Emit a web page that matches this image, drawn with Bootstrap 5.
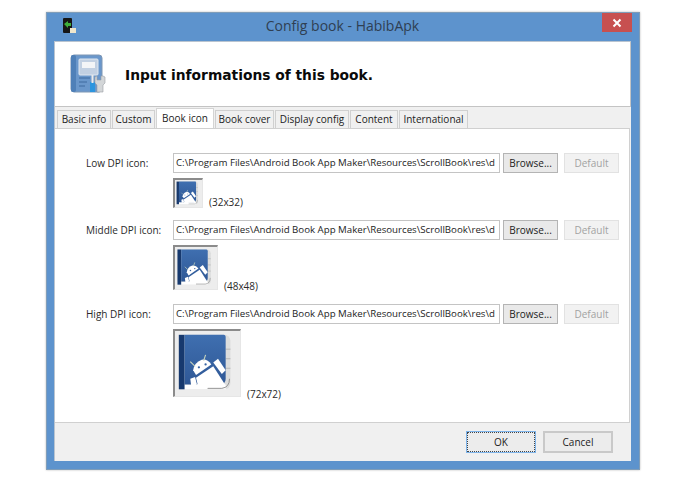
<!DOCTYPE html>
<html lang="en">
<head>
<meta charset="utf-8">
<title>Config book - HabibApk</title>
<link href="https://cdn.jsdelivr.net/npm/bootstrap@5.3.0/dist/css/bootstrap.min.css" rel="stylesheet">
<style>
html,body{background:#fff;height:487px;overflow:hidden}
body{padding:12px 60px 0 46px;font-family:"Open Sans","Liberation Sans",sans-serif;font-size:10px;color:#1c1c1c;line-height:1.2}
.win{width:594px;height:458px;background:#5d93cd;border:1px solid #7f9db9;padding:0 8px 8px 7px;box-shadow:0 0 2px #bbb}
.titlebar{height:28px;position:relative}
.wintitle{font-size:14px;color:#2f3f52;padding-bottom:1px}
.appicon{position:absolute;left:9px;top:5px}
.closebtn{position:absolute;right:-1px;top:0;width:30px;height:19px;background:#c75050;color:#fff}
.client{background:#f0f0f0;height:421px;border:1px solid #b9c4d0;border-width:1px 0 0 1px}
.headbox{height:65px;background:#fff;border:1px solid #c4c4c4;border-width:0 1px 1px 0;padding-left:15px;gap:16px}
.headtxt{font-family:"DejaVu Sans",sans-serif;font-weight:700;font-size:13.8px;color:#0a0a0a;padding-top:2px}
.tabbar{height:21px;padding:2px 0 0 2px;align-items:flex-end}
.wintab{height:18px;background:#f0f0f0;border:1px solid #d0d0d0;border-bottom:0;margin-right:1px;text-align:center;line-height:17px}
.wintab.on{background:#fff;height:20px;margin:0 1px 0 0;line-height:18px;border-color:#d4d4d4;padding-bottom:2px}
.panel{height:295px;background:#fff;border:1px solid #d0d0d0;border-width:1px 1px 1px 0;margin-right:1px;padding:24px 0 0 31px}
.flabel{width:87px;color:#2a2a2a;padding-top:1px}
.pathbox{width:327px;height:20px;border:1px solid #c4c4c4;background:#fff;padding:0 2px;line-height:18px;white-space:nowrap;overflow:hidden;font-size:9.7px}
.winbtn{width:55px;height:20px;background:#e9e9e9;border:1px solid #b4b4b4;text-align:center;line-height:18px;margin-left:3px}
.winbtn.off{margin-left:6px;background:#f2f2f2;border-color:#e2e2e2;color:#a2a2a2}
.thumbrow{margin:5px 0 12px 87px;align-items:flex-end}
.thumbrow.wide{margin-bottom:14px}
.thumbframe{display:block;background:#ededed;border:1px solid #e6e6e6;border-top:2px solid #8b8b8b;border-left:2px solid #8b8b8b}
.sz{margin-left:6px;color:#2a2a2a}
.wide .sz{margin-bottom:-2px}
.huge .sz{margin-bottom:-3px}
.foot{height:38px;padding:8px 0 0 411px;gap:7px}
.dlgbtn{width:70px;height:22px;background:#ececec;border:2px solid #c9c9c9;text-align:center;line-height:18px}
.dlgbtn.main{border:1px solid #7eb4ea;outline:1px dotted #444;outline-offset:-2px;line-height:20px}
</style>
</head>
<body>
<svg width="0" height="0" class="d-block">
<defs>
<linearGradient id="cv" x1="0" y1="0" x2="0" y2="1"><stop offset="0" stop-color="#3f6fb0"/><stop offset="1" stop-color="#2f5896"/></linearGradient>
<symbol id="bk" viewBox="0 0 68 68">
<path d="M4 4H51Q57 4 58 10V54Q58 61 51 61H4Z" fill="#dcdddd"/>
<path d="M53 19H58M53 29H58M53 39H58" stroke="#b5b5b5"/>
<path d="M4 56H53V61H4Z" fill="#fff"/>
<path d="M57 50Q57 59 49 60H34" stroke="#8e8e8e" fill="none"/>
<rect x="4" y="4" width="6" height="57" fill="#17396e"/>
<path d="M10 4H51Q53 4 53 7V50Q53 56 47 56H10Z" fill="url(#cv)"/>
<g fill="#fff">
<path d="M19 41Q20 33 28 30Q34 29 38 35L22 46Z"/>
<path d="M22 49L40 37L53 57H24Z"/>
<path d="M40 33L45 29L53 41L49 45Z"/>
<path d="M16 50L21 48L23 56L17 58Z"/>
<path d="M24 55H34V60H21Z"/>
</g>
<path d="M21 37L16 32M30 31L32 25" stroke="#c6d3bd" stroke-width="1.200"/>
<circle cx="25" cy="38" r="1.200" fill="#3a66a4"/><circle cx="32" cy="35" r="1.200" fill="#3a66a4"/>
</symbol>
</defs>
</svg>
<div class="win d-flex flex-column">
  <div class="titlebar d-flex align-items-center justify-content-center">
    <svg class="appicon" width="14" height="16" viewBox="0 0 14 16"><rect x="0" y="0" width="9" height="15" rx="1" fill="#161616"/><path d="M1 6L5 3V5H8V8H5V10Z" fill="#3fae3a"/><rect x="7" y="10" width="6" height="5" fill="#efe6cc"/></svg>
    <span class="wintitle">Config book - HabibApk</span>
    <div class="closebtn d-flex align-items-center justify-content-center"><svg width="10" height="10" viewBox="0 0 10 10"><path d="M1.500 1.500L8.500 8.500M8.500 1.500L1.500 8.500" stroke="#fff" stroke-width="2"/></svg></div>
  </div>
  <div class="client">
    <div class="headbox d-flex align-items-center">
      <svg width="39" height="39" viewBox="0 0 39 39">
        <rect x="1" y="1" width="31" height="37" rx="3" fill="#6a97cb" stroke="#7f97b4"/>
        <rect x="1" y="1" width="5" height="37" rx="2" fill="#4f80b8"/>
        <rect x="9" y="5" width="19" height="16" rx="1" fill="#c2d0e2" stroke="#dfe7f0"/>
        <rect x="12" y="8" width="13" height="6" fill="#f4f5f7"/>
        <path d="M9 24H20M9 28H17M9 32H15" stroke="#3e6b9f"/>
        <rect x="20" y="28" width="5" height="10" fill="#2c95de"/><rect x="21.500" y="21" width="2" height="8" fill="#eaeaea"/>
        <path d="M27 22V26H31V22H33L35 23V29L33 31V38H27V31L25 29V23Z" fill="#d3d6d8" stroke="#9aa0a4" stroke-width=".6"/>
      </svg>
      <span class="headtxt">Input informations of this book.</span>
    </div>
    <div class="tabbar d-flex">
      <div class="wintab" style="width:54px">Basic info</div>
      <div class="wintab" style="width:43px">Custom</div>
      <div class="wintab on" style="width:58px">Book icon</div>
      <div class="wintab" style="width:59px">Book cover</div>
      <div class="wintab" style="width:74px">Display config</div>
      <div class="wintab" style="width:48px">Content</div>
      <div class="wintab" style="width:69px">International</div>
    </div>
    <div class="panel">
      <div class="d-flex align-items-center">
        <div class="flabel">Low DPI icon:</div>
        <div class="pathbox">C:\Program Files\Android Book App Maker\Resources\ScrollBook\res\d</div>
        <div class="winbtn">Browse...</div><div class="winbtn off">Default</div>
      </div>
      <div class="thumbrow d-flex">
        <svg class="thumbframe" width="30" height="30"><use href="#bk"/></svg><span class="sz">(32x32)</span>
      </div>
      <div class="d-flex align-items-center">
        <div class="flabel">Middle DPI icon:</div>
        <div class="pathbox">C:\Program Files\Android Book App Maker\Resources\ScrollBook\res\d</div>
        <div class="winbtn">Browse...</div><div class="winbtn off">Default</div>
      </div>
      <div class="thumbrow wide d-flex">
        <svg class="thumbframe" width="45" height="45"><use href="#bk"/></svg><span class="sz">(48x48)</span>
      </div>
      <div class="d-flex align-items-center">
        <div class="flabel">High DPI icon:</div>
        <div class="pathbox">C:\Program Files\Android Book App Maker\Resources\ScrollBook\res\d</div>
        <div class="winbtn">Browse...</div><div class="winbtn off">Default</div>
      </div>
      <div class="thumbrow huge d-flex">
        <svg class="thumbframe" width="68" height="68"><use href="#bk"/></svg><span class="sz">(72x72)</span>
      </div>
    </div>
    <div class="foot d-flex">
      <div class="dlgbtn main">OK</div><div class="dlgbtn">Cancel</div>
    </div>
  </div>
</div>
<script src="https://cdn.jsdelivr.net/npm/bootstrap@5.3.0/dist/js/bootstrap.bundle.min.js"></script>
</body>
</html>
